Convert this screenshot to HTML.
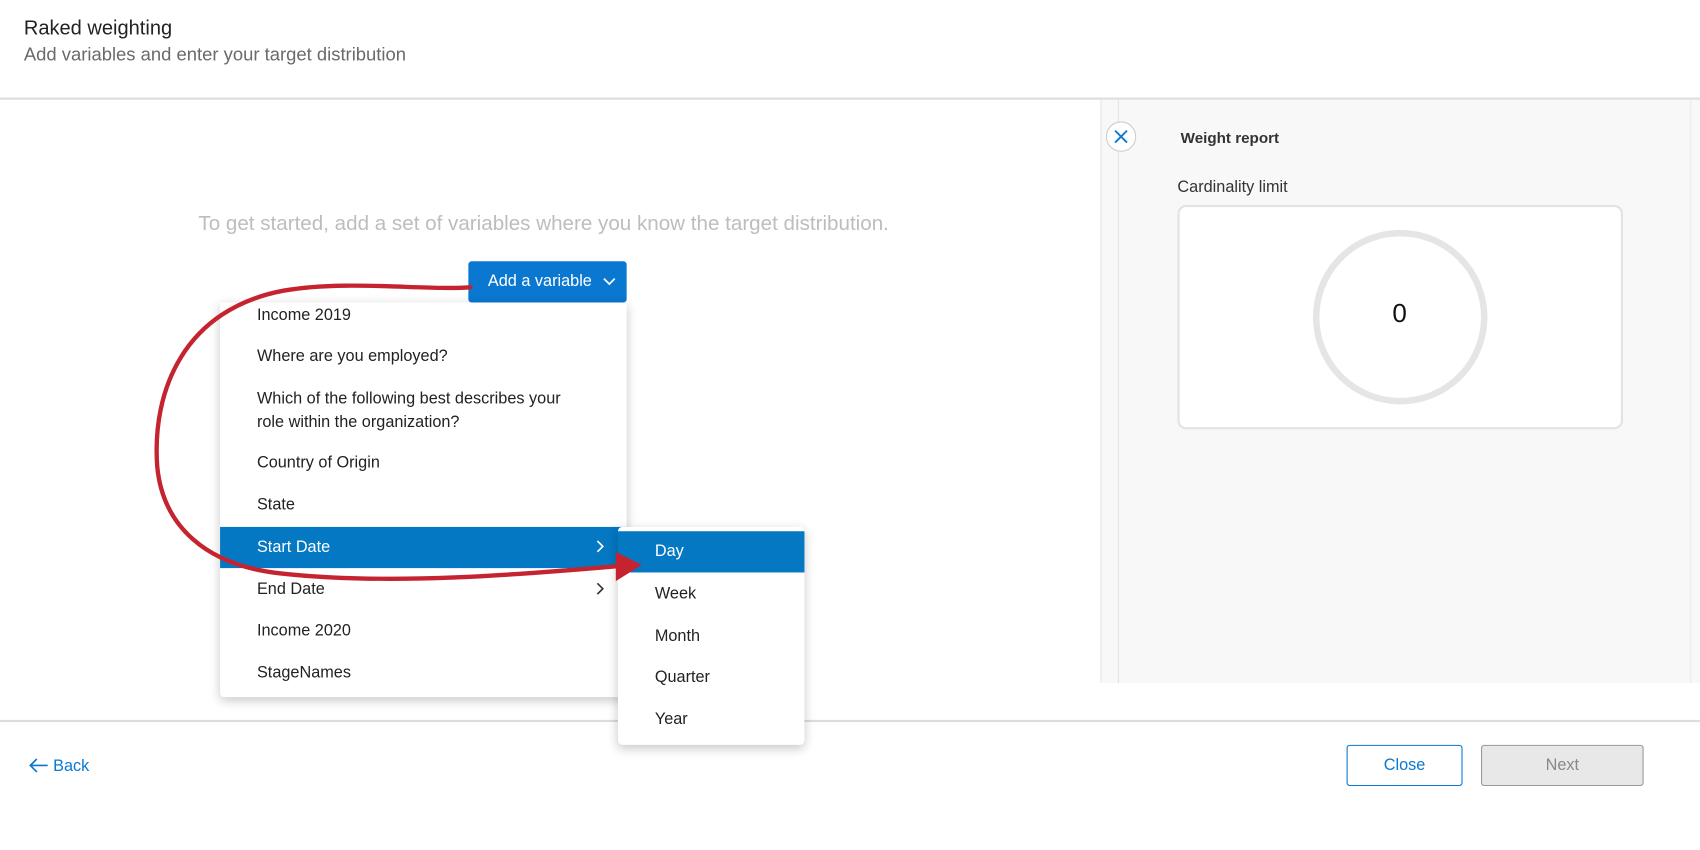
<!DOCTYPE html>
<html><head><meta charset="utf-8"><style>
*{box-sizing:border-box;margin:0;padding:0}
html,body{width:1700px;height:850px;overflow:hidden;background:#fff}
#s{position:absolute;left:0;top:0;width:1568px;height:784px;transform:scale(1.08418);transform-origin:0 0;font-family:"Liberation Sans",sans-serif;color:#1a1a1a}
.a{position:absolute}
.it{position:absolute;left:34px;font-size:15px;color:#222;white-space:nowrap}
</style></head><body><div id="s">
<div class="a" style="left:22px;top:15px;font-size:18.5px;color:#222">Raked weighting</div>
<div class="a" style="left:22px;top:41px;font-size:17px;color:#6a6a6a">Add variables and enter your target distribution</div>
<div class="a" style="left:0;top:90px;width:1568px;height:2px;background:#ddd"></div>
<div class="a" style="left:0;top:664px;width:1568px;height:2px;background:#ddd"></div>

<div class="a" style="left:1015px;top:92px;width:553px;height:538px;background:#f8f8f8;border-left:1px solid #e6e6e6"></div>
<div class="a" style="left:1031px;top:92px;width:1px;height:538px;background:#e2e2e2"></div>
<div class="a" style="left:1559px;top:92px;width:1px;height:538px;background:#ebebeb"></div>
<div class="a" style="left:1020px;top:112px;width:28px;height:28px;border-radius:50%;background:#fff;border:1px solid #ccc"></div>
<svg class="a" style="left:1020px;top:112px" width="28" height="28"><path d="M8.5 8.5L19.5 19.5M19.5 8.5L8.5 19.5" stroke="#0a78d0" stroke-width="1.7" fill="none"/></svg>
<div class="a" style="left:1089px;top:119px;font-size:14px;font-weight:bold;color:#333">Weight report</div>
<div class="a" style="left:1086px;top:164px;font-size:15px;color:#333">Cardinality limit</div>
<div class="a" style="left:1086px;top:189px;width:411px;height:207px;background:#fff;border:2px solid #e3e3e3;border-radius:8px"></div>
<div class="a" style="left:1211px;top:212px;width:161px;height:161px;border-radius:50%;border:6px solid #e5e5e5"></div>
<div class="a" style="left:1271px;top:276px;width:40px;text-align:center;font-size:24px;color:#111">0</div>

<div class="a" style="left:183px;top:196px;font-size:19px;color:#bdbdbd;white-space:nowrap">To get started, add a set of variables where you know the target distribution.</div>

<div class="a" style="left:432px;top:241px;width:146px;height:38px;background:#0a78d0;border-radius:3px;color:#fff;font-size:15px;line-height:38px;padding-left:18px">Add a variable</div>
<svg class="a" style="left:555px;top:255px" width="14" height="10"><path d="M2 2L7 7L12 2" stroke="#fff" stroke-width="1.6" fill="none"/></svg>

<div class="a" style="left:203px;top:279px;width:375px;height:364px;background:#fff;border-radius:0 0 4px 4px;box-shadow:0 3px 10px rgba(0,0,0,.22)">
<div class="it" style="top:3px">Income 2019</div>
<div class="it" style="top:41px">Where are you employed?</div>
<div class="it" style="top:78px;line-height:22px">Which of the following best describes your<br>role within the organization?</div>
<div class="it" style="top:139px">Country of Origin</div>
<div class="it" style="top:178px">State</div>
<div class="a" style="left:0;top:207px;width:375px;height:38px;background:#0478c2"></div>
<div class="it" style="top:217px;color:#fff">Start Date</div>
<svg class="a" style="left:346px;top:218px" width="10" height="14"><path d="M2 2L7 7L2 12" stroke="#fff" stroke-width="1.5" fill="none"/></svg>
<div class="it" style="top:256px">End Date</div>
<svg class="a" style="left:346px;top:257px" width="10" height="14"><path d="M2 2L7 7L2 12" stroke="#333" stroke-width="1.5" fill="none"/></svg>
<div class="it" style="top:294px">Income 2020</div>
<div class="it" style="top:333px">StageNames</div>
</div>

<div class="a" style="left:570px;top:486px;width:172px;height:201px;background:#fff;border-radius:4px;box-shadow:0 3px 10px rgba(0,0,0,.22)">
<div class="a" style="left:0;top:4px;width:172px;height:38px;background:#0478c2"></div>
<div class="it" style="top:14px;color:#fff">Day</div>
<div class="it" style="top:53px">Week</div>
<div class="it" style="top:92px">Month</div>
<div class="it" style="top:130px">Quarter</div>
<div class="it" style="top:169px">Year</div>
</div>

<svg class="a" style="left:0;top:0" width="1568" height="784">
<path d="M434 265 C390 268 320 258 262 268 C170 285 140 360 145 430 C150 485 190 522 260 529 C360 540 480 530 572 522" stroke="#c4232f" stroke-width="4" fill="none" stroke-linecap="round"/>
<path d="M568 509 L592 521 L568 536 Z" fill="#c4232f"/>
</svg>

<svg class="a" style="left:24px;top:697px" width="24" height="18"><path d="M20 9H4M10 3L4 9L10 15" stroke="#0a78d0" stroke-width="1.6" fill="none"/></svg>
<div class="a" style="left:49px;top:698px;font-size:15px;color:#0a78d0">Back</div>
<div class="a" style="left:1242px;top:687px;width:107px;height:38px;border:1px solid #0a78d0;border-radius:3px;color:#0a78d0;font-size:15px;line-height:36px;text-align:center">Close</div>
<div class="a" style="left:1366px;top:687px;width:150px;height:38px;border:1px solid #999;background:#e8e8e8;border-radius:3px;color:#888;font-size:15px;line-height:36px;text-align:center">Next</div>
</div></body></html>
